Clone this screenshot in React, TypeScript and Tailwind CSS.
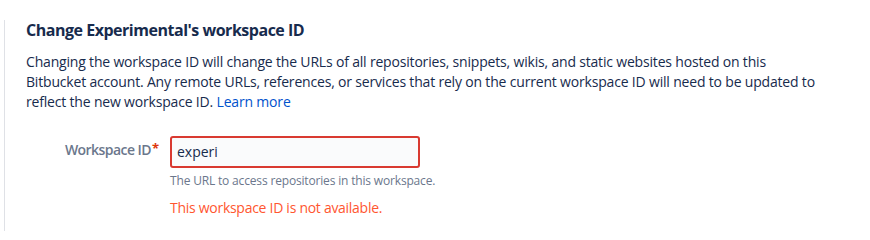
export default function App() {
  return (
    <div className="w-[870px] h-[231px] bg-white overflow-hidden" style={{ fontFamily: '"Open Sans", "Noto Sans", sans-serif' }}>
      <div className="mt-[20px] ml-[4px] h-[211px] border-l border-[#dfe1e6] pl-[21px] text-[#172B4D]">
        <h2 className="text-[16px] leading-[20px] font-bold tracking-[-0.03em] text-[#172B4D]">
          Change Experimental's workspace ID
        </h2>
        <p className="mt-[12px] text-[14px] leading-[20px] tracking-[-0.013em] whitespace-nowrap">
          Changing the workspace ID will change the URLs of all repositories, snippets, wikis, and static websites hosted on this
          <br />
          Bitbucket account. Any remote URLs, references, or services that rely on the current workspace ID will need to be updated to
          <br />
          reflect the new workspace ID. <a href="#" className="text-[#0052CC]">Learn more</a>
        </p>
        <div className="mt-[24px] flex items-start">
          <label className="w-[134px] pt-[4px] flex justify-end items-start text-[14px] leading-[20px] font-semibold tracking-[-0.04em] text-[#6B778C] whitespace-nowrap">
            Workspace ID
            <span className="text-[#DE350B] text-[13px] leading-[16px] font-bold ml-[1px] mr-[1px] tracking-normal">*</span>
          </label>
          <div className="ml-[10px] flex flex-col">
            <div className="w-[250px] h-[32px] border-2 border-[#D93A31] rounded-[3px] bg-[#FAFBFC] flex items-center pl-[5px]">
              <input
                className="w-full bg-transparent outline-none text-[14px] leading-[20px] text-[#172B4D]"
                defaultValue="experi"
                style={{ fontFamily: '"Open Sans", "Noto Sans", sans-serif' }}
              />
            </div>
            <div className="mt-[5px] text-[12px] leading-[16px] tracking-[-0.014em] text-[#6B778C] whitespace-nowrap">
              The URL to access repositories in this workspace.
            </div>
            <div className="mt-[9px] text-[14px] leading-[20px] tracking-[-0.02em] text-[#FF5630] whitespace-nowrap">
              This workspace ID is not available.
            </div>
          </div>
        </div>
      </div>
    </div>
  );
}
